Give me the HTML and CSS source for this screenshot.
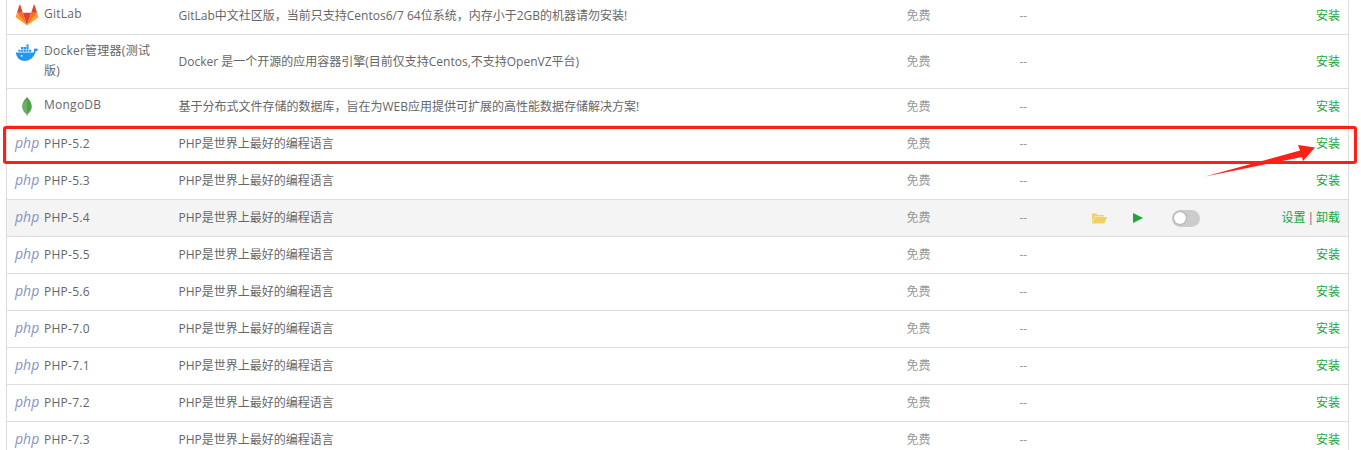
FILE: index.html
```html
<!DOCTYPE html>
<html lang="en">
<head>
    <meta charset="UTF-8">
    <meta name="viewport" content="width=device-width, initial-scale=1.0">
    <title>软件管理</title>
    <link rel="stylesheet" href="styles.css">
</head>
<body>
    <table class="soft-table">
        <colgroup>
            <col class="col-name">
            <col class="col-desc">
            <col class="col-price">
            <col class="col-expire">
            <col class="col-tools">
            <col class="col-action">
        </colgroup>
        <tbody>
            <tr>
                <td class="name">
                    <svg class="logo" viewBox="0 0 24 24"><path fill="#e24329" d="M12 22.500 16.400 9H7.600z"/><path fill="#fc6d26" d="M12 22.500 7.600 9H1.500z"/><path fill="#fca326" d="M1.500 9 .2 13c-.1.4 0 .8.3 1L12 22.500z"/><path fill="#e24329" d="M1.500 9h6.100L5 1c-.1-.4-.7-.4-.9 0z"/><path fill="#fc6d26" d="M12 22.500 16.400 9h6.100z"/><path fill="#fca326" d="m22.500 9 1.300 4c.1.4 0 .8-.3 1L12 22.500z"/><path fill="#e24329" d="M22.500 9h-6.100L19 1c.1-.4.7-.4.9 0z"/></svg>
                    GitLab
                </td>
                <td>GitLab中文社区版，当前只支持Centos6/7 64位系统，内存小于2GB的机器请勿安装!</td>
                <td class="muted">免费</td>
                <td class="muted">--</td>
                <td></td>
                <td class="action"><a href="#">安装</a></td>
            </tr>
            <tr>
                <td class="name">
                    <svg class="logo" viewBox="0 0 24 24"><path fill="#2496ed" d="M.3 12h18.600c.7-1.300.6-2.700 0-3.700 1-.6 2.300-.7 3.500-.3.500.2 1 .6 1.300.9-.5 1-1.400 1.700-2.600 1.900-1.500 6-5.700 10-11.500 10C4.500 20.800 1 17.500.3 12z"/><path fill="#2496ed" d="M3 9h2.300v2.300H3zm2.800 0h2.300v2.300H5.800zm2.800 0h2.300v2.300H8.600zm2.800 0h2.300v2.300h-2.300zm2.800 0h2.300v2.300h-2.300zM5.800 6.300h2.300v2.300H5.800zm2.800 0h2.300v2.300H8.600zm2.800 0h2.300v2.300h-2.300zm0-2.700h2.300v2.300h-2.300z"/><circle cx="6.500" cy="15.500" r="1" fill="#fff"/></svg>
                    Docker管理器(测试版)
                </td>
                <td>Docker 是一个开源的应用容器引擎(目前仅支持Centos,不支持OpenVZ平台)</td>
                <td class="muted">免费</td>
                <td class="muted">--</td>
                <td></td>
                <td class="action"><a href="#">安装</a></td>
            </tr>
            <tr>
                <td class="name">
                    <svg class="logo" viewBox="0 0 24 24"><path fill="#4fa046" d="M12 2c2.800 3.200 5 6.200 5 10 0 3.700-2.200 6.500-4.400 8L12 22.500l-.6-2.500C9.200 18.500 7 15.700 7 12c0-3.800 2.200-6.800 5-10z"/><path fill="#8cc084" d="M12 5v15l-.6 0C9.200 18.500 7.500 15.700 7.500 12c0-2.800 2.200-5 4.500-7z" opacity=".5"/></svg>
                    MongoDB
                </td>
                <td>基于分布式文件存储的数据库，旨在为WEB应用提供可扩展的高性能数据存储解决方案!</td>
                <td class="muted">免费</td>
                <td class="muted">--</td>
                <td></td>
                <td class="action"><a href="#">安装</a></td>
            </tr>
            <tr>
                <td class="name"><span class="php">php</span>PHP-5.2</td>
                <td>PHP是世界上最好的编程语言</td>
                <td class="muted">免费</td>
                <td class="muted">--</td>
                <td></td>
                <td class="action"><a href="#">安装</a></td>
            </tr>
            <tr>
                <td class="name"><span class="php">php</span>PHP-5.3</td>
                <td>PHP是世界上最好的编程语言</td>
                <td class="muted">免费</td>
                <td class="muted">--</td>
                <td></td>
                <td class="action"><a href="#">安装</a></td>
            </tr>
            <tr class="installed">
                <td class="name"><span class="php">php</span>PHP-5.4</td>
                <td>PHP是世界上最好的编程语言</td>
                <td class="muted">免费</td>
                <td class="muted">--</td>
                <td>
                    <div class="tools">
                        <svg class="folder" viewBox="0 0 16 12"><path fill="#f0d264" d="M1 1.500h4.500l1 1.500H13v1.500H4L1 10z"/><path fill="#f0d264" d="M4.300 5H16l-2.600 6.500H.8z"/></svg>
                        <svg class="play" viewBox="0 0 10 10"><path fill="#20a53a" d="M0 0l10 5-10 5z"/></svg>
                        <span class="switch"><span class="knob"></span></span>
                    </div>
                </td>
                <td class="action"><a href="#">设置</a><span class="sep">|</span><a href="#">卸载</a></td>
            </tr>
            <tr>
                <td class="name"><span class="php">php</span>PHP-5.5</td>
                <td>PHP是世界上最好的编程语言</td>
                <td class="muted">免费</td>
                <td class="muted">--</td>
                <td></td>
                <td class="action"><a href="#">安装</a></td>
            </tr>
            <tr>
                <td class="name"><span class="php">php</span>PHP-5.6</td>
                <td>PHP是世界上最好的编程语言</td>
                <td class="muted">免费</td>
                <td class="muted">--</td>
                <td></td>
                <td class="action"><a href="#">安装</a></td>
            </tr>
            <tr>
                <td class="name"><span class="php">php</span>PHP-7.0</td>
                <td>PHP是世界上最好的编程语言</td>
                <td class="muted">免费</td>
                <td class="muted">--</td>
                <td></td>
                <td class="action"><a href="#">安装</a></td>
            </tr>
            <tr>
                <td class="name"><span class="php">php</span>PHP-7.1</td>
                <td>PHP是世界上最好的编程语言</td>
                <td class="muted">免费</td>
                <td class="muted">--</td>
                <td></td>
                <td class="action"><a href="#">安装</a></td>
            </tr>
            <tr>
                <td class="name"><span class="php">php</span>PHP-7.2</td>
                <td>PHP是世界上最好的编程语言</td>
                <td class="muted">免费</td>
                <td class="muted">--</td>
                <td></td>
                <td class="action"><a href="#">安装</a></td>
            </tr>
            <tr>
                <td class="name"><span class="php">php</span>PHP-7.3</td>
                <td>PHP是世界上最好的编程语言</td>
                <td class="muted">免费</td>
                <td class="muted">--</td>
                <td></td>
                <td class="action"><a href="#">安装</a></td>
            </tr>
        </tbody>
    </table>

    <!-- annotation drawn over the screenshot -->
    <div class="mark-box"></div>
    <svg class="mark-arrow" viewBox="0 0 120 40"><path fill="#ff2015" d="M5 36.500 100 10.500 98 5 115 7.500 103 21 102 17z"/></svg>
</body>
</html>
```

FILE: styles.css
```css
* {
    margin: 0;
    padding: 0;
    box-sizing: border-box;
}

html, body {
    height: 450px;
    overflow: hidden;
}

body {
    position: relative;
    background-color: #fff;
    padding: 0 13px 0 6px;
    font-family: "Open Sans", "Noto Sans CJK SC", sans-serif;
    font-size: 12px;
    line-height: 20px;
    color: #666;
}

.soft-table {
    width: 1342px;
    margin-top: -3px;
    table-layout: fixed;
    border-collapse: collapse;
    border: 1px solid #ddd;
}

.col-name { width: 164px; }
.col-desc { width: 728px; }
.col-price { width: 113px; }
.col-expire { width: 63px; }
.col-tools { width: 142px; }
.col-action { width: 132px; }

.soft-table td {
    padding: 8px;
    border-bottom: 1px solid #ddd;
    vertical-align: middle;
}

.soft-table td.name {
    padding: 6px 20px 7px 8px;
    letter-spacing: .25px;
}

.soft-table td.muted {
    color: #999;
}

.installed {
    background-color: #f4f4f4;
}

.logo {
    float: left;
    width: 24px;
    height: 23px;
    margin-right: 5px;
}

.php {
    float: left;
    width: 24px;
    margin-right: 5px;
    font-style: italic;
    font-size: 14px;
    line-height: 18px;
    letter-spacing: 0;
    color: #8892bf;
    text-align: center;
}

.action {
    text-align: right;
}

.action a {
    color: #20a53a;
    text-decoration: none;
}

.sep {
    margin: 0 2px;
}

.tools {
    display: flex;
    align-items: center;
}

.folder {
    width: 16px;
    height: 12px;
    margin-left: 8px;
    margin-right: 26px;
}

.play {
    width: 10px;
    height: 10px;
    margin-right: 29px;
}

.switch {
    display: flex;
    align-items: center;
    width: 28px;
    height: 17px;
    padding: 0 2px;
    background-color: #ccc;
    border-radius: 9px;
}

.knob {
    display: block;
    width: 12px;
    height: 12px;
    background-color: #fff;
    border-radius: 50%;
    box-shadow: 0 0 2px rgba(0, 0, 0, 0.4);
}

.mark-box {
    position: absolute;
    left: 3px;
    top: 126px;
    width: 1354px;
    height: 38px;
    border: 3px solid #ff2015;
    border-radius: 3px;
}

.mark-arrow {
    position: absolute;
    left: 1200px;
    top: 140px;
    width: 120px;
    height: 40px;
}
```
